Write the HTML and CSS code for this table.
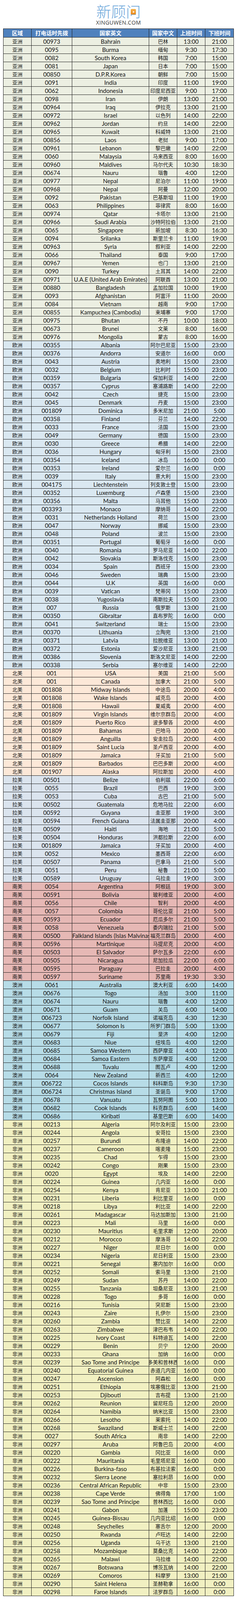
FILE: index.html
```html
<!DOCTYPE html>
<html lang="zh-CN">
<head>
<meta charset="utf-8">
<title>各国上下班时间</title>
<link rel="stylesheet" href="styles.css">
</head>
<body>
<header class="brand">
  <div class="logo-cn">新顾问<span class="logo-play"><svg viewBox="0 0 10 10" width="7" height="7"><path d="M2 1.2 L8.6 5 L2 8.8 Z" fill="#fff"/></svg></span></div>
  <div class="logo-en">XINGUWEN.COM</div>
</header>
<table class="tbl">
<colgroup><col class="c1"><col class="c2"><col class="c3"><col class="c4"><col class="c5"><col class="c6"></colgroup>
<thead>
<tr><th>区域</th><th>打电话时先拨</th><th>国家英文</th><th>国家中文</th><th>上班时间</th><th>下班时间</th></tr>
</thead>
<tbody>
<tr class="as"><td>亚洲</td><td>00973</td><td>Bahrain</td><td>巴林</td><td>13:00</td><td>21:00</td></tr>
<tr class="as"><td>亚洲</td><td>0095</td><td>Burma</td><td>缅甸</td><td>9:30</td><td>17:30</td></tr>
<tr class="as"><td>亚洲</td><td>0082</td><td>South Korea</td><td>韩国</td><td>7:00</td><td>15:00</td></tr>
<tr class="as"><td>亚洲</td><td>0081</td><td>Japan</td><td>日本</td><td>7:00</td><td>15:00</td></tr>
<tr class="as"><td>亚洲</td><td>00850</td><td>D.P.R.Korea</td><td>朝鲜</td><td>7:00</td><td>15:00</td></tr>
<tr class="as"><td>亚洲</td><td>0091</td><td>India</td><td>印度</td><td>11:00</td><td>19:00</td></tr>
<tr class="as"><td>亚洲</td><td>0062</td><td>Indonesia</td><td>印度尼西亚</td><td>9:00</td><td>17:00</td></tr>
<tr class="as"><td>亚洲</td><td>0098</td><td>Iran</td><td>伊朗</td><td>13:00</td><td>21:00</td></tr>
<tr class="as"><td>亚洲</td><td>00964</td><td>Iraq</td><td>伊拉克</td><td>13:00</td><td>21:00</td></tr>
<tr class="as"><td>亚洲</td><td>00972</td><td>Israel</td><td>以色列</td><td>14:00</td><td>22:00</td></tr>
<tr class="as"><td>亚洲</td><td>00962</td><td>Jordan</td><td>约旦</td><td>14:00</td><td>22:00</td></tr>
<tr class="as"><td>亚洲</td><td>00965</td><td>Kuwait</td><td>科威特</td><td>13:00</td><td>21:00</td></tr>
<tr class="as"><td>亚洲</td><td>00856</td><td>Laos</td><td>老挝</td><td>9:00</td><td>17:00</td></tr>
<tr class="as"><td>亚洲</td><td>00961</td><td>Lebanon</td><td>黎巴嫩</td><td>14:00</td><td>22:00</td></tr>
<tr class="as"><td>亚洲</td><td>0060</td><td>Malaysia</td><td>马来西亚</td><td>8:00</td><td>16:00</td></tr>
<tr class="as"><td>亚洲</td><td>00960</td><td>Maldives</td><td>马尔代夫</td><td>10:30</td><td>18:30</td></tr>
<tr class="as"><td>亚洲</td><td>00674</td><td>Nauru</td><td>瑙鲁</td><td>4:00</td><td>12:00</td></tr>
<tr class="as"><td>亚洲</td><td>00977</td><td>Nepal</td><td>尼泊尔</td><td>11:00</td><td>19:00</td></tr>
<tr class="as"><td>亚洲</td><td>00968</td><td>Nepal</td><td>阿曼</td><td>12:00</td><td>20:00</td></tr>
<tr class="as"><td>亚洲</td><td>0092</td><td>Pakistan</td><td>巴基斯坦</td><td>11:00</td><td>19:00</td></tr>
<tr class="as"><td>亚洲</td><td>0063</td><td>Philippines</td><td>菲律宾</td><td>8:00</td><td>16:00</td></tr>
<tr class="as"><td>亚洲</td><td>00974</td><td>Qatar</td><td>卡塔尔</td><td>13:00</td><td>21:00</td></tr>
<tr class="as"><td>亚洲</td><td>00966</td><td>Saudi Arabia</td><td>沙特阿拉伯</td><td>13:00</td><td>21:00</td></tr>
<tr class="as"><td>亚洲</td><td>0065</td><td>Singapore</td><td>新加坡</td><td>8:30</td><td>16:30</td></tr>
<tr class="as"><td>亚洲</td><td>0094</td><td>Srilanka</td><td>斯里兰卡</td><td>11:00</td><td>19:00</td></tr>
<tr class="as"><td>亚洲</td><td>00963</td><td>Syria</td><td>叙利亚</td><td>14:00</td><td>22:00</td></tr>
<tr class="as"><td>亚洲</td><td>0066</td><td>Thailand</td><td>泰国</td><td>9:00</td><td>17:00</td></tr>
<tr class="as"><td>亚洲</td><td>00967</td><td>Yemen</td><td>也门</td><td>13:00</td><td>21:00</td></tr>
<tr class="as"><td>亚洲</td><td>0090</td><td>Turkey</td><td>土耳其</td><td>14:00</td><td>22:00</td></tr>
<tr class="as"><td>亚洲</td><td>00971</td><td>U.A.E (United Arab Emirates)</td><td>阿联酋</td><td>13:00</td><td>21:00</td></tr>
<tr class="as"><td>亚洲</td><td>00880</td><td>Bangladesh</td><td>孟加拉国</td><td>10:00</td><td>19:00</td></tr>
<tr class="as"><td>亚洲</td><td>0093</td><td>Afghanistan</td><td>阿富汗</td><td>11:00</td><td>20:00</td></tr>
<tr class="as"><td>亚洲</td><td>0084</td><td>Vietnam</td><td>越南</td><td>9:00</td><td>17:00</td></tr>
<tr class="as"><td>亚洲</td><td>00855</td><td>Kampuchea (Cambodia)</td><td>柬埔寨</td><td>9:00</td><td>17:00</td></tr>
<tr class="as"><td>亚洲</td><td>00975</td><td>Bhutan</td><td>不丹</td><td>10:00</td><td>18:00</td></tr>
<tr class="as"><td>亚洲</td><td>00673</td><td>Brunei</td><td>文莱</td><td>8:00</td><td>16:00</td></tr>
<tr class="as"><td>亚洲</td><td>00976</td><td>Mongolia</td><td>蒙古</td><td>8:00</td><td>16:00</td></tr>
<tr class="eu"><td>欧洲</td><td>00355</td><td>Albania</td><td>阿尔巴尼亚</td><td>15:00</td><td>23:00</td></tr>
<tr class="eu"><td>欧洲</td><td>00376</td><td>Andorra</td><td>安道尔</td><td>16:00</td><td>0:00</td></tr>
<tr class="eu"><td>欧洲</td><td>0043</td><td>Austria</td><td>奥地利</td><td>15:00</td><td>23:00</td></tr>
<tr class="eu"><td>欧洲</td><td>0032</td><td>Belgium</td><td>比利时</td><td>15:00</td><td>23:00</td></tr>
<tr class="eu"><td>欧洲</td><td>00359</td><td>Bulgaria</td><td>保加利亚</td><td>14:00</td><td>22:00</td></tr>
<tr class="eu"><td>欧洲</td><td>00357</td><td>Cyprus</td><td>塞浦路斯</td><td>14:00</td><td>22:00</td></tr>
<tr class="eu"><td>欧洲</td><td>0042</td><td>Czech</td><td>捷克</td><td>15:00</td><td>23:00</td></tr>
<tr class="eu"><td>欧洲</td><td>0045</td><td>Denmark</td><td>丹麦</td><td>15:00</td><td>23:00</td></tr>
<tr class="eu"><td>欧洲</td><td>001809</td><td>Dominica</td><td>多米尼加</td><td>21:00</td><td>5:00</td></tr>
<tr class="eu"><td>欧洲</td><td>00358</td><td>Finland</td><td>芬兰</td><td>14:00</td><td>22:00</td></tr>
<tr class="eu"><td>欧洲</td><td>0033</td><td>France</td><td>法国</td><td>15:00</td><td>23:00</td></tr>
<tr class="eu"><td>欧洲</td><td>0049</td><td>Germany</td><td>德国</td><td>15:00</td><td>23:00</td></tr>
<tr class="eu"><td>欧洲</td><td>0030</td><td>Greece</td><td>希腊</td><td>14:00</td><td>22:00</td></tr>
<tr class="eu"><td>欧洲</td><td>0036</td><td>Hungary</td><td>匈牙利</td><td>15:00</td><td>23:00</td></tr>
<tr class="eu"><td>欧洲</td><td>00354</td><td>Iceland</td><td>冰岛</td><td>16:00</td><td>0:00</td></tr>
<tr class="eu"><td>欧洲</td><td>00353</td><td>Ireland</td><td>爱尔兰</td><td>16:00</td><td>0:00</td></tr>
<tr class="eu"><td>欧洲</td><td>0039</td><td>Italy</td><td>意大利</td><td>15:00</td><td>23:00</td></tr>
<tr class="eu"><td>欧洲</td><td>004175</td><td>Liechtenstein</td><td>列支敦士登</td><td>15:00</td><td>23:00</td></tr>
<tr class="eu"><td>欧洲</td><td>00352</td><td>Luxemburg</td><td>卢森堡</td><td>15:00</td><td>23:00</td></tr>
<tr class="eu"><td>欧洲</td><td>00356</td><td>Malta</td><td>马耳他</td><td>15:00</td><td>23:00</td></tr>
<tr class="eu"><td>欧洲</td><td>003393</td><td>Monaco</td><td>摩纳哥</td><td>14:00</td><td>22:00</td></tr>
<tr class="eu"><td>欧洲</td><td>0031</td><td>Netherlands Holland</td><td>荷兰</td><td>15:00</td><td>23:00</td></tr>
<tr class="eu"><td>欧洲</td><td>0047</td><td>Norway</td><td>挪威</td><td>15:00</td><td>23:00</td></tr>
<tr class="eu"><td>欧洲</td><td>0048</td><td>Poland</td><td>波兰</td><td>15:00</td><td>23:00</td></tr>
<tr class="eu"><td>欧洲</td><td>00351</td><td>Portugal</td><td>葡萄牙</td><td>16:00</td><td>0:00</td></tr>
<tr class="eu"><td>欧洲</td><td>0040</td><td>Romania</td><td>罗马尼亚</td><td>14:00</td><td>22:00</td></tr>
<tr class="eu"><td>欧洲</td><td>0042</td><td>Slovakia</td><td>斯洛伐克</td><td>15:00</td><td>23:00</td></tr>
<tr class="eu"><td>欧洲</td><td>0034</td><td>Spain</td><td>西班牙</td><td>15:00</td><td>23:00</td></tr>
<tr class="eu"><td>欧洲</td><td>0046</td><td>Sweden</td><td>瑞典</td><td>15:00</td><td>23:00</td></tr>
<tr class="eu"><td>欧洲</td><td>0044</td><td>U.K</td><td>英国</td><td>16:00</td><td>0:00</td></tr>
<tr class="eu"><td>欧洲</td><td>0039</td><td>Vatican</td><td>梵蒂冈</td><td>15:00</td><td>23:00</td></tr>
<tr class="eu"><td>欧洲</td><td>0038</td><td>Yugoslavia</td><td>南斯拉夫</td><td>15:00</td><td>23:00</td></tr>
<tr class="eu"><td>欧洲</td><td>007</td><td>Russia</td><td>俄罗斯</td><td>13:00</td><td>21:00</td></tr>
<tr class="eu"><td>欧洲</td><td>00350</td><td>Gibraltar</td><td>直布罗陀</td><td>16:00</td><td>0:00</td></tr>
<tr class="eu"><td>欧洲</td><td>0041</td><td>Switzerland</td><td>瑞士</td><td>15:00</td><td>23:00</td></tr>
<tr class="eu"><td>欧洲</td><td>00370</td><td>Lithuania</td><td>立陶宛</td><td>13:00</td><td>21:00</td></tr>
<tr class="eu"><td>欧洲</td><td>00371</td><td>Latvia</td><td>拉脱维亚</td><td>13:00</td><td>21:00</td></tr>
<tr class="eu"><td>欧洲</td><td>00372</td><td>Estonia</td><td>爱沙尼亚</td><td>13:00</td><td>21:00</td></tr>
<tr class="eu"><td>欧洲</td><td>00386</td><td>Slovenia</td><td>斯洛文尼亚</td><td>14:00</td><td>22:00</td></tr>
<tr class="eu"><td>欧洲</td><td>00338</td><td>Serbia</td><td>塞尔维亚</td><td>14:00</td><td>22:00</td></tr>
<tr class="na"><td>北美</td><td>001</td><td>USA</td><td>美国</td><td>21:00</td><td>5:00</td></tr>
<tr class="na"><td>北美</td><td>001</td><td>Canada</td><td>加拿大</td><td>21:00</td><td>5:00</td></tr>
<tr class="na"><td>北美</td><td>001808</td><td>Midway Islands</td><td>中途岛</td><td>20:00</td><td>4:00</td></tr>
<tr class="na"><td>北美</td><td>001808</td><td>Wake Islands</td><td>威克岛</td><td>20:00</td><td>4:00</td></tr>
<tr class="na"><td>北美</td><td>001808</td><td>Hawaii</td><td>夏威夷</td><td>20:00</td><td>4:00</td></tr>
<tr class="na"><td>北美</td><td>001809</td><td>Virgin Islands</td><td>维尔京群岛</td><td>20:00</td><td>4:00</td></tr>
<tr class="na"><td>北美</td><td>001809</td><td>Puerto Rico</td><td>波多黎各</td><td>20:00</td><td>4:00</td></tr>
<tr class="na"><td>北美</td><td>001809</td><td>Bahamas</td><td>巴哈马</td><td>20:00</td><td>4:00</td></tr>
<tr class="na"><td>北美</td><td>001809</td><td>Anguilla</td><td>安圭拉岛</td><td>20:00</td><td>4:00</td></tr>
<tr class="na"><td>北美</td><td>001809</td><td>Saint Lucia</td><td>圣卢西亚</td><td>20:00</td><td>4:00</td></tr>
<tr class="na"><td>北美</td><td>001809</td><td>Jamaica</td><td>牙买加</td><td>21:00</td><td>5:00</td></tr>
<tr class="na"><td>北美</td><td>001809</td><td>Barbados</td><td>巴巴多斯</td><td>20:00</td><td>4:00</td></tr>
<tr class="na"><td>北美</td><td>001907</td><td>Alaska</td><td>阿拉斯加</td><td>20:00</td><td>4:00</td></tr>
<tr class="la"><td>拉美</td><td>00501</td><td>Belize</td><td>伯利兹</td><td>22:00</td><td>6:00</td></tr>
<tr class="la"><td>拉美</td><td>0055</td><td>Brazil</td><td>巴西</td><td>19:00</td><td>3:00</td></tr>
<tr class="la"><td>拉美</td><td>0053</td><td>Cuba</td><td>古巴</td><td>21:00</td><td>5:00</td></tr>
<tr class="la"><td>拉美</td><td>00502</td><td>Guatemala</td><td>危地马拉</td><td>22:00</td><td>6:00</td></tr>
<tr class="la"><td>拉美</td><td>00592</td><td>Guyana</td><td>圭亚那</td><td>19:00</td><td>3:00</td></tr>
<tr class="la"><td>拉美</td><td>00594</td><td>French Guiana</td><td>法属圭亚那</td><td>20:00</td><td>4:00</td></tr>
<tr class="la"><td>拉美</td><td>00509</td><td>Haiti</td><td>海地</td><td>21:00</td><td>5:00</td></tr>
<tr class="la"><td>拉美</td><td>00504</td><td>Honduras</td><td>洪都拉斯</td><td>22:00</td><td>6:00</td></tr>
<tr class="la"><td>拉美</td><td>001809</td><td>Jamaica</td><td>牙买加</td><td>20:00</td><td>4:00</td></tr>
<tr class="la"><td>拉美</td><td>0052</td><td>Mexico</td><td>墨西哥</td><td>22:00</td><td>6:00</td></tr>
<tr class="la"><td>拉美</td><td>00507</td><td>Panama</td><td>巴拿马</td><td>21:00</td><td>5:00</td></tr>
<tr class="la"><td>拉美</td><td>0051</td><td>Peru</td><td>秘鲁</td><td>21:00</td><td>5:00</td></tr>
<tr class="la"><td>拉美</td><td>00589</td><td>Uruguay</td><td>乌拉圭</td><td>19:00</td><td>3:00</td></tr>
<tr class="sa"><td>南美</td><td>0054</td><td>Argentina</td><td>阿根廷</td><td>19:00</td><td>3:00</td></tr>
<tr class="sa"><td>南美</td><td>00591</td><td>Bolivia</td><td>玻利维亚</td><td>20:00</td><td>4:00</td></tr>
<tr class="sa"><td>南美</td><td>0056</td><td>Chile</td><td>智利</td><td>20:00</td><td>4:00</td></tr>
<tr class="sa"><td>南美</td><td>0057</td><td>Colombia</td><td>哥伦比亚</td><td>21:00</td><td>5:00</td></tr>
<tr class="sa"><td>南美</td><td>00593</td><td>Ecuador</td><td>厄瓜多尔</td><td>21:00</td><td>5:00</td></tr>
<tr class="sa"><td>南美</td><td>0058</td><td>Venezuela</td><td>委内瑞拉</td><td>21:00</td><td>5:00</td></tr>
<tr class="sa"><td>南美</td><td>00500</td><td>Falkland Islands (Islas Malvinas)</td><td>福克兰群岛</td><td>20:00</td><td>4:00</td></tr>
<tr class="sa"><td>南美</td><td>00596</td><td>Martinique</td><td>马提尼克</td><td>20:00</td><td>4:00</td></tr>
<tr class="sa"><td>南美</td><td>00503</td><td>El Salvador</td><td>萨尔瓦多</td><td>22:00</td><td>6:00</td></tr>
<tr class="sa"><td>南美</td><td>00505</td><td>Nicaragua</td><td>尼加拉瓜</td><td>22:00</td><td>6:00</td></tr>
<tr class="sa"><td>南美</td><td>00595</td><td>Paraguay</td><td>巴拉圭</td><td>20:00</td><td>4:00</td></tr>
<tr class="sa"><td>南美</td><td>00597</td><td>Suriname</td><td>苏里南</td><td>19:30</td><td>3:30</td></tr>
<tr class="oc"><td>澳洲</td><td>0061</td><td>Australia</td><td>澳大利亚</td><td>6:00</td><td>14:00</td></tr>
<tr class="oc"><td>澳洲</td><td>00676</td><td>Togo</td><td>汤加</td><td>3:00</td><td>11:00</td></tr>
<tr class="oc"><td>澳洲</td><td>00674</td><td>Nauru</td><td>瑙鲁</td><td>4:00</td><td>12:00</td></tr>
<tr class="oc"><td>澳洲</td><td>00671</td><td>Guam</td><td>关岛</td><td>6:00</td><td>14:00</td></tr>
<tr class="oc"><td>澳洲</td><td>006723</td><td>Norfolk Island</td><td>诺福克岛</td><td>4:30</td><td>12:30</td></tr>
<tr class="oc"><td>澳洲</td><td>00677</td><td>Solomon Is</td><td>所罗门群岛</td><td>5:00</td><td>13:00</td></tr>
<tr class="oc"><td>澳洲</td><td>00679</td><td>Fiji</td><td>斐济</td><td>4:00</td><td>12:00</td></tr>
<tr class="oc"><td>澳洲</td><td>00683</td><td>Niue</td><td>纽埃岛</td><td>4:00</td><td>12:00</td></tr>
<tr class="oc"><td>澳洲</td><td>00685</td><td>Samoa Western</td><td>西萨摩亚</td><td>4:00</td><td>12:00</td></tr>
<tr class="oc"><td>澳洲</td><td>00684</td><td>Samoa Eastern</td><td>东萨摩亚</td><td>4:00</td><td>12:00</td></tr>
<tr class="oc"><td>澳洲</td><td>00688</td><td>Tuvalu</td><td>图瓦卢</td><td>4:00</td><td>12:00</td></tr>
<tr class="oc"><td>澳洲</td><td>0064</td><td>New Zealand</td><td>新西兰</td><td>4:00</td><td>12:00</td></tr>
<tr class="oc"><td>澳洲</td><td>006722</td><td>Cocos Islands</td><td>科科斯岛</td><td>9:30</td><td>17:30</td></tr>
<tr class="oc"><td>澳洲</td><td>006724</td><td>Christmas Island</td><td>圣诞岛</td><td>9:00</td><td>17:00</td></tr>
<tr class="oc"><td>澳洲</td><td>00678</td><td>Vanuatu</td><td>瓦努阿图</td><td>5:00</td><td>13:00</td></tr>
<tr class="oc"><td>澳洲</td><td>00682</td><td>Cook Islands</td><td>科克群岛</td><td>6:00</td><td>14:00</td></tr>
<tr class="oc"><td>澳洲</td><td>00686</td><td>Kiribati</td><td>基里巴斯</td><td>6:00</td><td>14:00</td></tr>
<tr class="af"><td>非洲</td><td>00213</td><td>Algeria</td><td>阿尔及利亚</td><td>15:00</td><td>23:00</td></tr>
<tr class="af"><td>非洲</td><td>00244</td><td>Angola</td><td>安哥拉</td><td>15:00</td><td>23:00</td></tr>
<tr class="af"><td>非洲</td><td>00257</td><td>Burundi</td><td>布隆迪</td><td>14:00</td><td>22:00</td></tr>
<tr class="af"><td>非洲</td><td>00237</td><td>Cameroon</td><td>喀麦隆</td><td>15:00</td><td>23:00</td></tr>
<tr class="af"><td>非洲</td><td>00235</td><td>Chad</td><td>乍得</td><td>15:00</td><td>23:00</td></tr>
<tr class="af"><td>非洲</td><td>00242</td><td>Congo</td><td>刚果</td><td>15:00</td><td>23:00</td></tr>
<tr class="af"><td>非洲</td><td>0020</td><td>Egypt</td><td>埃及</td><td>14:00</td><td>22:00</td></tr>
<tr class="af"><td>非洲</td><td>00224</td><td>Guinea</td><td>几内亚</td><td>16:00</td><td>0:00</td></tr>
<tr class="af"><td>非洲</td><td>00254</td><td>Kenya</td><td>肯尼亚</td><td>13:00</td><td>21:00</td></tr>
<tr class="af"><td>非洲</td><td>00231</td><td>Liberia</td><td>利比里亚</td><td>16:00</td><td>0:00</td></tr>
<tr class="af"><td>非洲</td><td>00218</td><td>Libya</td><td>利比亚</td><td>14:00</td><td>22:00</td></tr>
<tr class="af"><td>非洲</td><td>00261</td><td>Madagascar</td><td>马达加斯加</td><td>13:00</td><td>21:00</td></tr>
<tr class="af"><td>非洲</td><td>00223</td><td>Mali</td><td>马里</td><td>16:00</td><td>0:00</td></tr>
<tr class="af"><td>非洲</td><td>00230</td><td>Mauritius</td><td>毛里求斯</td><td>12:00</td><td>20:00</td></tr>
<tr class="af"><td>非洲</td><td>00212</td><td>Morocco</td><td>摩洛哥</td><td>14:00</td><td>22:00</td></tr>
<tr class="af"><td>非洲</td><td>00227</td><td>Niger</td><td>尼日尔</td><td>16:00</td><td>0:00</td></tr>
<tr class="af"><td>非洲</td><td>00234</td><td>Nigeria</td><td>尼日利亚</td><td>15:00</td><td>23:00</td></tr>
<tr class="af"><td>非洲</td><td>00221</td><td>Senegal</td><td>塞内加尔</td><td>16:00</td><td>0:00</td></tr>
<tr class="af"><td>非洲</td><td>00252</td><td>Somali</td><td>索马里</td><td>13:00</td><td>21:00</td></tr>
<tr class="af"><td>非洲</td><td>00249</td><td>Sudan</td><td>苏丹</td><td>14:00</td><td>22:00</td></tr>
<tr class="af"><td>非洲</td><td>00255</td><td>Tanzania</td><td>坦桑尼亚</td><td>13:00</td><td>21:00</td></tr>
<tr class="af"><td>非洲</td><td>00228</td><td>Togo</td><td>多哥</td><td>16:00</td><td>0:00</td></tr>
<tr class="af"><td>非洲</td><td>00216</td><td>Tunisia</td><td>突尼斯</td><td>15:00</td><td>23:00</td></tr>
<tr class="af"><td>非洲</td><td>00243</td><td>Zaire</td><td>扎伊尔</td><td>15:00</td><td>23:00</td></tr>
<tr class="af"><td>非洲</td><td>00260</td><td>Zambia</td><td>赞比亚</td><td>14:00</td><td>22:00</td></tr>
<tr class="af"><td>非洲</td><td>00263</td><td>Zimbabwe</td><td>津巴布韦</td><td>14:00</td><td>22:00</td></tr>
<tr class="af"><td>非洲</td><td>00225</td><td>Ivory Coast</td><td>科特迪瓦</td><td>14:00</td><td>22:00</td></tr>
<tr class="af"><td>非洲</td><td>00229</td><td>Benin</td><td>贝宁</td><td>12:00</td><td>20:00</td></tr>
<tr class="af"><td>非洲</td><td>00233</td><td>Ghana</td><td>加纳</td><td>16:00</td><td>0:00</td></tr>
<tr class="af"><td>非洲</td><td>00239</td><td>Sao Tome and Principe</td><td><div class="clip">圣多美和普林西比</div></td><td>16:00</td><td>0:00</td></tr>
<tr class="af"><td>非洲</td><td>00240</td><td>Equatorial Guinea</td><td>赤道几内亚</td><td>16:00</td><td>0:00</td></tr>
<tr class="af"><td>非洲</td><td>00247</td><td>Ascension</td><td>阿森松</td><td>16:00</td><td>0:00</td></tr>
<tr class="af"><td>非洲</td><td>00251</td><td>Ethiopia</td><td>埃塞俄比亚</td><td>13:00</td><td>21:00</td></tr>
<tr class="af"><td>非洲</td><td>00253</td><td>Djibouti</td><td>吉布提</td><td>13:00</td><td>21:00</td></tr>
<tr class="af"><td>非洲</td><td>00262</td><td>Reunion</td><td>留尼旺岛</td><td>12:00</td><td>20:00</td></tr>
<tr class="af"><td>非洲</td><td>00264</td><td>Namibia</td><td>纳米比亚</td><td>15:00</td><td>23:00</td></tr>
<tr class="af"><td>非洲</td><td>00266</td><td>Lesotho</td><td>莱索托</td><td>14:00</td><td>22:00</td></tr>
<tr class="af"><td>非洲</td><td>00268</td><td>Swaziland</td><td>斯威士兰</td><td>14:00</td><td>22:00</td></tr>
<tr class="af"><td>非洲</td><td>0027</td><td>South Africa</td><td>南非</td><td>14:00</td><td>22:00</td></tr>
<tr class="af"><td>非洲</td><td>00297</td><td>Aruba</td><td>阿鲁巴岛</td><td>20:00</td><td>4:00</td></tr>
<tr class="af"><td>非洲</td><td>00220</td><td>Gambia</td><td>冈比亚</td><td>16:00</td><td>0:00</td></tr>
<tr class="af"><td>非洲</td><td>00222</td><td>Mauritania</td><td>毛里塔尼亚</td><td>16:00</td><td>0:00</td></tr>
<tr class="af"><td>非洲</td><td>00226</td><td>Burkina-faso</td><td>布基拉法索</td><td>16:00</td><td>0:00</td></tr>
<tr class="af"><td>非洲</td><td>00232</td><td>Sierra Leone</td><td>塞拉利昂</td><td>16:00</td><td>0:00</td></tr>
<tr class="af"><td>非洲</td><td>00236</td><td>Central African Republic</td><td>中非</td><td>15:00</td><td>23:00</td></tr>
<tr class="af"><td>非洲</td><td>00238</td><td>Cape Verde</td><td>佛得角</td><td>17:00</td><td>1:00</td></tr>
<tr class="af"><td>非洲</td><td>00239</td><td>Sao Tome and Principe</td><td>普林西比</td><td>16:00</td><td>0:00</td></tr>
<tr class="af"><td>非洲</td><td>00241</td><td>Gabon</td><td>加蓬</td><td>15:00</td><td>23:00</td></tr>
<tr class="af"><td>非洲</td><td>00245</td><td>Guinea-Bissau</td><td>几内亚比绍</td><td>16:00</td><td>0:00</td></tr>
<tr class="af"><td>非洲</td><td>00248</td><td>Seychelles</td><td>塞舌尔</td><td>12:00</td><td>20:00</td></tr>
<tr class="af"><td>非洲</td><td>00250</td><td>Rwanda</td><td>卢旺达</td><td>14:00</td><td>22:00</td></tr>
<tr class="af"><td>非洲</td><td>00256</td><td>Uganda</td><td>乌干达</td><td>13:00</td><td>21:00</td></tr>
<tr class="af"><td>非洲</td><td>00258</td><td>Mozambique</td><td>莫桑比克</td><td>14:00</td><td>22:00</td></tr>
<tr class="af"><td>非洲</td><td>00265</td><td>Malawi</td><td>马拉维</td><td>14:00</td><td>22:00</td></tr>
<tr class="af"><td>非洲</td><td>00267</td><td>Botswana</td><td>博茨瓦纳</td><td>14:00</td><td>22:00</td></tr>
<tr class="af"><td>非洲</td><td>00269</td><td>Comoros</td><td>科摩罗</td><td>13:00</td><td>21:00</td></tr>
<tr class="af"><td>非洲</td><td>00290</td><td>Saint Helena</td><td>圣赫勒拿</td><td>16:00</td><td>0:00</td></tr>
<tr class="af"><td>非洲</td><td>00298</td><td>Faroe Islands</td><td>法罗群岛</td><td>16:00</td><td>0:00</td></tr>
</tbody>
</table>
</body>
</html>
```
FILE: styles.css
```css
html, body {
  margin: 0;
  padding: 0;
  background: #ffffff;
}

body {
  font-family: "Lato", "Noto Sans CJK SC", sans-serif;
  color: #141414;
}

.brand {
  height: 73px;
  display: flex;
  flex-direction: column;
  align-items: center;
}

.logo-cn {
  position: relative;
  margin-top: 8px;
  font-family: "Noto Sans CJK SC", sans-serif;
  font-weight: 300;
  font-size: 38px;
  line-height: 40px;
  color: #6aa6da;
  letter-spacing: 0;
}

.logo-play {
  position: absolute;
  left: 89px;
  top: 15px;
  width: 13px;
  height: 14px;
  border-radius: 2px;
  background: linear-gradient(#f6b24a, #e8891c);
  display: flex;
  align-items: center;
  justify-content: center;
}

.logo-play svg {
  display: block;
  margin-left: 1px;
}

.logo-en {
  margin-top: 2px;
  font-family: "Open Sans", sans-serif;
  font-size: 14px;
  line-height: 16px;
  color: #333333;
  letter-spacing: 0.4px;
}

.tbl {
  border-collapse: collapse;
  table-layout: fixed;
  width: 590px;
  margin: 0 auto;
}

.tbl .c1 { width: 72px; }
.tbl .c2 { width: 104px; }
.tbl .c3 { width: 197px; }
.tbl .c4 { width: 72px; }
.tbl .c5 { width: 72px; }
.tbl .c6 { width: 73px; }

.tbl th,
.tbl td {
  border: 1px solid #1e1e1e;
  padding: 0;
  text-align: center;
  white-space: nowrap;
  overflow: hidden;
}

.tbl th {
  height: 21px;
  background: #4f81bd;
  color: #ffffff;
  font-family: "Noto Sans CJK SC", sans-serif;
  font-weight: 700;
  font-size: 14px;
  line-height: 21px;
}

.tbl td {
  height: 20px;
  line-height: 20px;
  font-size: 15px;
}

.tbl td:nth-child(1),
.tbl td:nth-child(4) {
  font-family: "Noto Sans CJK SC", sans-serif;
  font-size: 13px;
}

.tbl .clip {
  display: flex;
  justify-content: center;
  width: 100%;
}

.tbl .as td { background: #ecefe2; }
.tbl .eu td { background: #dae8f1; }
.tbl .na td { background: #fce8d8; }
.tbl .la td { background: #dbe4ee; }
.tbl .sa td { background: #e6b8b5; }
.tbl .oc td { background: #b7dce7; }
.tbl .af td { background: #f1f0c2; }
```
